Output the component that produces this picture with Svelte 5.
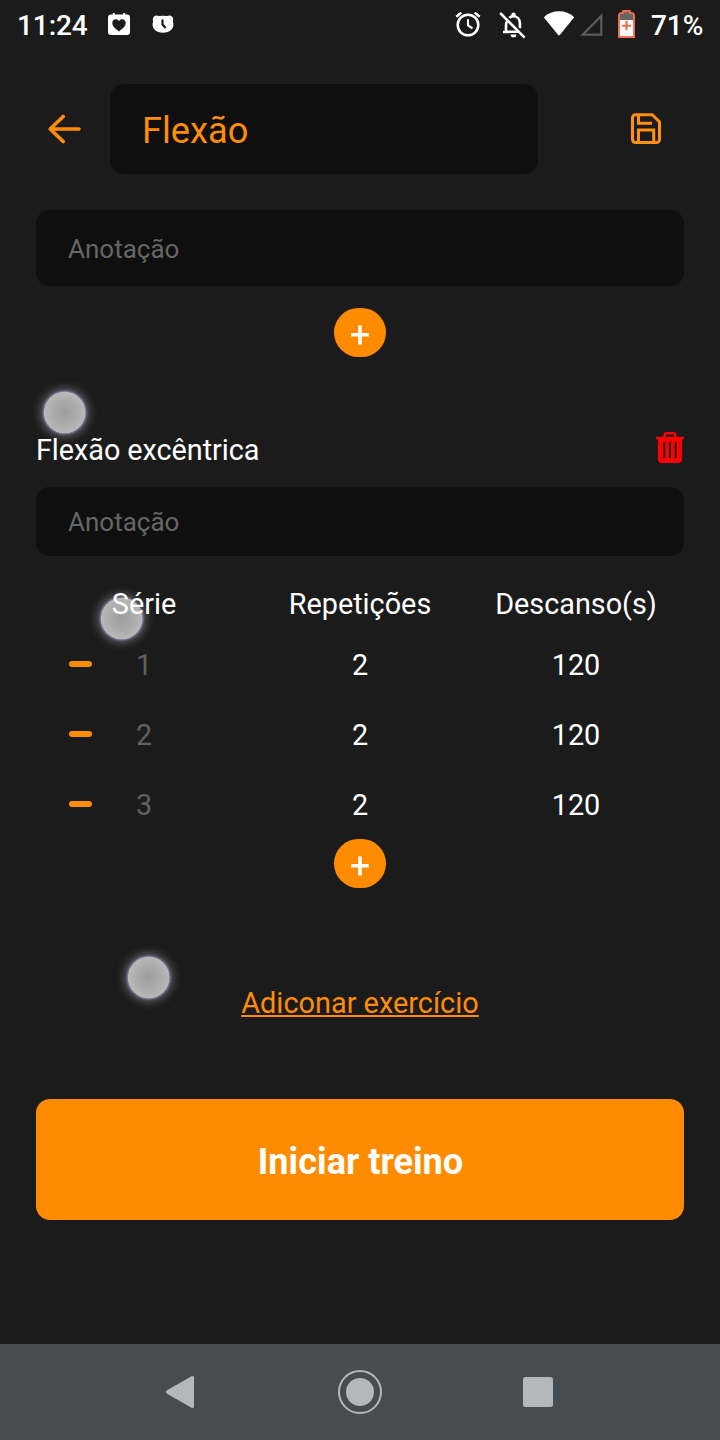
<script>
  let title = $state('Flexão');
  const sets = [
    { n: 1, reps: 2, rest: 120 },
    { n: 2, reps: 2, rest: 120 },
    { n: 3, reps: 2, rest: 120 }
  ];
  const touches = [
    { x: 65, y: 413 },
    { x: 122, y: 619 },
    { x: 149, y: 978 }
  ];
</script>

{#snippet plus()}
  <button class="add" aria-label="+">
    <svg width="18" height="20" viewBox="0 0 18 20"><path d="M9 .6v18.800M.2 9.800h17.600" stroke="#fff" stroke-width="3.600" /></svg>
  </button>
{/snippet}

<div class="screen">
  {#each touches as t}
    <i class="touch" style="left:{t.x}px;top:{t.y}px"></i>
  {/each}

  <header class="status">
    <span class="clock">11:24</span>
    <svg class="cal" width="22" height="22" viewBox="0 0 22 22">
      <path fill="#fff" d="M3 1.500h1.800V0h2v1.500h8.400V0h2v1.500H19a3 3 0 0 1 3 3V19a3 3 0 0 1-3 3H3a3 3 0 0 1-3-3V4.500a3 3 0 0 1 3-3z" />
      <path fill="#1b1b1b" d="M11 18.500C7 15.300 4.300 13 4.300 10c0-4 4.800-5 6.700-1.800C12.900 5 17.700 6 17.700 10c0 3-2.700 5.300-6.700 8.500z" />
    </svg>
    <svg class="bear" width="22" height="18" viewBox="0 0 22 18">
      <path fill="#fff" d="M1.200 6.500C-.3 3 2.500-1 7 1.100q4-.8 8 0C19.500-1 22.300 3 20.800 6.500 23 11.500 19.500 17.800 11 17.800S-1 11.500 1.200 6.500z" />
      <path fill="none" stroke="#1b1b1b" stroke-width="2.200" d="M10.500 4.500v5l3.200 3.500" />
    </svg>
    <span class="grow"></span>
    <svg class="alarm" width="26" height="26" viewBox="0 0 26 26" fill="none" stroke="#fff" stroke-width="2.500">
      <circle cx="13" cy="14" r="10.300" />
      <path d="M13 8.200v6.300l4.500 2.900" stroke-width="2.100" /><path d="M1.300 5.800l5-4.200M24.700 5.800l-5-4.200" />
    </svg>
    <svg class="bell" width="28" height="28" viewBox="0 0 28 28">
      <path fill="none" stroke="#fff" stroke-width="2.600" d="M8 10.400c-.7 1.200-1 2.700-1 4.300v6h15M9.800 7.300C11 6 12.700 5.200 14.500 5.200c4 0 6.400 3.200 6.400 7v5M4 21h6" />
      <path fill="#fff" d="M12.300 5V3.700a2.200 2.200 0 0 1 4.400 0V5zM11.600 23.400h5.800a2.900 2.900 0 0 1-5.800 0z" />
      <path d="M3.200 1.200L28 26.500" stroke="#1b1b1b" stroke-width="2.200" />
      <path d="M1.200 2L25.600 26.700" stroke="#fff" stroke-width="2.500" />
    </svg>
    <svg class="wifi" width="32" height="25" viewBox="0 0 32 25"><path fill="#fff" d="M.8 6.200C9-1.700 23-1.700 31.200 6.200L17 23.800q-1 1-2 0z" /></svg>
    <svg class="signal" width="23" height="23" viewBox="0 0 23 23"><path fill="none" stroke="#5b5b5b" stroke-width="2.200" d="M21.300 3v18.600H2.700z" /></svg>
    <svg class="battery" width="17" height="28" viewBox="0 0 18 29" preserveAspectRatio="none">
      <path fill="#666" stroke="#f26b4b" stroke-width="2" d="M5.500 3V1h7v2H14q3 0 3 3v22H1V6q0-3 3-3z" />
      <path fill="#fff" d="M2 10.500h14V27H2z" />
      <path d="M9 11.500v9.600M4.200 16.300h9.600" stroke="#f26b4b" stroke-width="2.300" />
    </svg>
    <span class="pct">71%</span>
  </header>

  <div class="top">
    <svg class="back" width="34" height="30" viewBox="0 0 34 30" fill="none" stroke="#ff8c08" stroke-width="3.600" stroke-linecap="round" stroke-linejoin="round"><path d="M16.200 2.500L3.200 15l13 12.500M3.500 15H32" /></svg>
    <input class="field title" bind:value={title} />
    <svg class="save" width="30" height="31" viewBox="0 0 30 31" fill="none" stroke="#ff9010" stroke-width="3" stroke-linejoin="round">
      <path d="M4.500 1.700h16.800l7.200 7.200v17.600a3 3 0 0 1-3 3h-21a3 3 0 0 1-3-3V4.700a3 3 0 0 1 3-3z" />
      <path stroke-linejoin="miter" d="M7.500 2v8.200H21M7.500 29V17h15.200V29" />
    </svg>
  </div>

  <input class="field note first" placeholder="Anotação" />
  <div class="addrow one">{@render plus()}</div>

  <section>
    <div class="name">
      <span>Flexão excêntrica</span>
      <svg width="28" height="31" viewBox="0 0 28 31">
        <path fill="none" stroke="#f00" stroke-width="2.500" d="M8.700 6V3.200q0-1.900 1.900-1.900h6.800q1.900 0 1.900 1.900V6" />
        <path fill="#f00" fill-rule="evenodd" d="M0 4.800h28v2.400h-1.900V27a4 4 0 0 1-4 4H5.900a4 4 0 0 1-4-4V7.200H0zM7.300 10v16h2V10zM13 10v16h2V10zM18.700 10v16h2V10z" />
      </svg>
    </div>
    <input class="field note second" placeholder="Anotação" />
    <div class="row head"><span>Série</span><span>Repetições</span><span>Descanso(s)</span></div>
    {#each sets as s}
      <div class="row">
        <span class="num"><i class="minus"></i>{s.n}</span>
        <span>{s.reps}</span>
        <span>{s.rest}</span>
      </div>
    {/each}
    <div class="addrow two">{@render plus()}</div>
  </section>

  <div class="more"><span>Adiconar exercício</span></div>
  <button class="start">Iniciar treino</button>

  <nav>
    <svg width="720" height="96" viewBox="0 0 720 96" fill="#b4b8ba">
      <path d="M167 46.300L191.500 32.200q2.500-1 2.500 1.300v29q0 2.300-2.500 1.300L167 49.700q-2-1.700 0-3.400z" />
      <circle cx="360" cy="48" r="14" />
      <circle cx="360" cy="48" r="21" fill="none" stroke="#b4b8ba" stroke-width="2" />
      <rect x="523" y="33" width="30" height="30" rx="2.500" />
    </svg>
  </nav>
</div>

<style>
  :global(body) { background: #1b1b1b; }
  .screen {
    position: relative; isolation: isolate; box-sizing: border-box; width: 720px; height: 1440px;
    display: flex; flex-direction: column; overflow: hidden;
    background: #1b1b1b; color: #fff; font: 28.8px Roboto, sans-serif;
  }
  svg { display: block; flex: none; }
  button, input { border: 0; outline: 0; margin: 0; font-family: inherit; box-sizing: border-box; }
  .touch {
    position: absolute; z-index: -1; width: 42px; height: 42px; margin: -21px 0 0 -21px; border-radius: 50%;
    transform: translate(-.3px, -.5px);
    background: radial-gradient(circle, #9d9d9d 0, #adadad 45%, #c7c7c7 100%);
    box-shadow: 0 0 2px 1px #7c7ea6, 0 0 8px 4px rgba(150, 150, 158, .5);
  }
  .status { display: flex; height: 84px; padding: 0 17px; align-items: flex-start; font-size: 28px; font-weight: 500; line-height: 52px; }
  .clock { width: 91px; }
  .cal { margin: 13px 0 0; }
  .bear { margin: 15px 0 0 22px; }
  .grow { flex: 1; }
  .alarm { margin: 11px 18px 0 0; }
  .bell { margin: 11px 16px 0 0; }
  .wifi { margin: 11px 5px 0 0; }
  .signal { margin: 13px 15px 0 0; }
  .battery { margin: 10px 16px 0 0; }
  .pct { width: 52px; white-space: nowrap; }
  .pct, .clock { letter-spacing: -.1px; }
  .top { display: flex; align-items: center; height: 90px; padding: 0 59px 0 47px; flex: none; }
  .field { display: block; background: #0f0f0f; border-radius: 14px; color: #ff8c08; }
  .title { width: 428px; height: 90px; margin-left: 29px; padding: 3px 32px 0; font-size: 36.200px; }
  .save { margin: -1px 0 0 auto; }
  .note { width: 648px; margin: 0 36px; padding: 2px 32px 0; font-size: 26px; flex: none; }
  .note::placeholder { color: #666; opacity: 1; }
  .first { height: 76px; margin-top: 36px; }
  .second { height: 69px; padding-top: 0; }
  .addrow { display: flex; justify-content: center; flex: none; }
  .one { margin-top: 22px; }
  .two { margin-top: -1px; }
  .add { width: 52px; height: 49px; border-radius: 25px; padding: 4px 0 0; background: #ff8c00; display: flex; align-items: center; justify-content: center; }
  section { margin-top: 68px; }
  .name { display: flex; justify-content: space-between; height: 62px; padding: 7px 36px 0; box-sizing: border-box; }
  .name span { line-height: 36px; letter-spacing: -.05px; }
  .row { display: grid; grid-template-columns: repeat(3, 216px); margin: 0 36px; height: 70px; line-height: 70px; text-align: center; }
  .head { height: 52px; margin-top: 22px; line-height: 52px; }
  .num { position: relative; color: #606060; }
  .minus { position: absolute; left: 33px; top: 31px; width: 23px; height: 6px; border-radius: 3px; background: #ff8c08; }
  .more { margin-top: 95px; height: 40px; line-height: 40px; text-align: center; color: #ff8c08; font-size: 28.900px; }
  .more span { text-decoration: underline; text-decoration-thickness: 1.5px; text-underline-offset: 2px; text-decoration-skip-ink: none; }
  .start { width: 648px; height: 121px; flex: none; margin: 76px 36px 0; padding: 4px 0 0 1px; border-radius: 14px; background: #ff8c00; color: #fff; font-size: 36.200px; font-weight: 700; }
  nav { height: 96px; margin-top: auto; background: #454d52; }
</style>
